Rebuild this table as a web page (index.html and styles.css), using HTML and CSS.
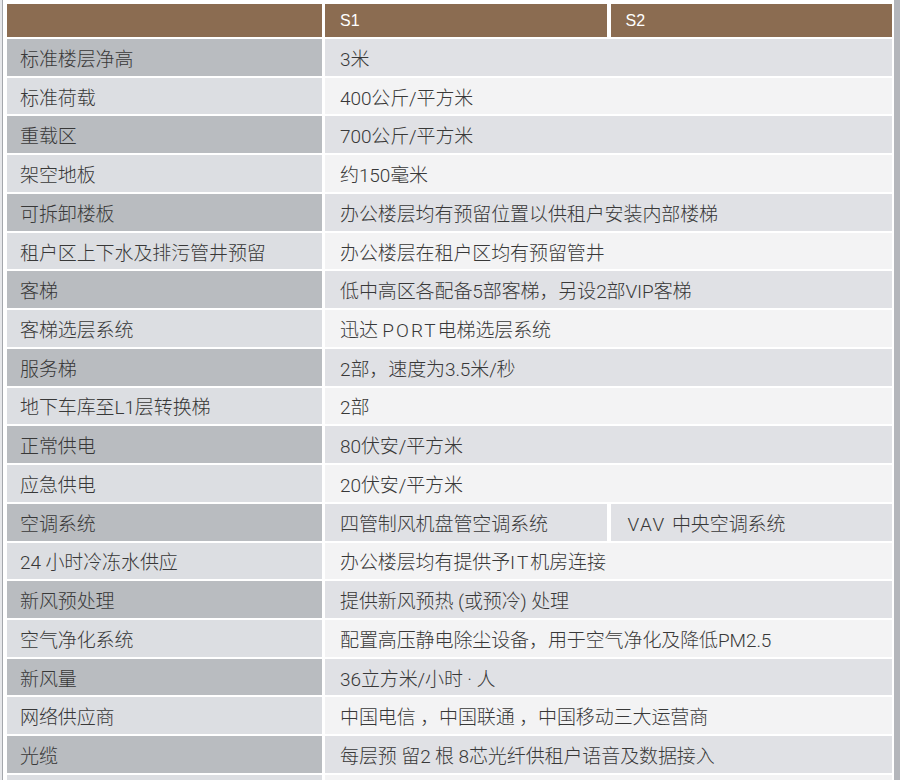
FILE: index.html
```html
<!DOCTYPE html>
<html lang="zh-CN">
<head>
<meta charset="utf-8">
<title>标准楼层规格</title>
<link rel="stylesheet" href="styles.css">
</head>
<body>
<div class="frame">
  <div class="inner">
    <div class="spec">
      <div class="cell head"></div>
      <div class="cell head"><span>S1</span></div>
      <div class="cell head"><span>S2</span></div>

      <div class="cell key dark"><span>标准楼层净高</span></div>
      <div class="cell val dark span"><span>3米</span></div>

      <div class="cell key light"><span>标准荷载</span></div>
      <div class="cell val light span"><span>400公斤/平方米</span></div>

      <div class="cell key dark"><span>重载区</span></div>
      <div class="cell val dark span"><span>700公斤/平方米</span></div>

      <div class="cell key light"><span>架空地板</span></div>
      <div class="cell val light span"><span>约150毫米</span></div>

      <div class="cell key dark"><span>可拆卸楼板</span></div>
      <div class="cell val dark span"><span>办公楼层均有预留位置以供租户安装内部楼梯</span></div>

      <div class="cell key light"><span>租户区上下水及排污管井预留</span></div>
      <div class="cell val light span"><span>办公楼层在租户区均有预留管井</span></div>

      <div class="cell key dark"><span>客梯</span></div>
      <div class="cell val dark span"><span>低中高区各配备5部客梯，另设2部VIP客梯</span></div>

      <div class="cell key light"><span>客梯选层系统</span></div>
      <div class="cell val light span"><span>迅达 <span class="wide">PORT</span>电梯选层系统</span></div>

      <div class="cell key dark"><span>服务梯</span></div>
      <div class="cell val dark span"><span>2部，速度为3.5米/秒</span></div>

      <div class="cell key light"><span>地下车库至L1层转换梯</span></div>
      <div class="cell val light span"><span>2部</span></div>

      <div class="cell key dark"><span>正常供电</span></div>
      <div class="cell val dark span"><span>80伏安/平方米</span></div>

      <div class="cell key light"><span>应急供电</span></div>
      <div class="cell val light span"><span>20伏安/平方米</span></div>

      <div class="cell key dark"><span>空调系统</span></div>
      <div class="cell val dark"><span>四管制风机盘管空调系统</span></div>
      <div class="cell val dark s2"><span><span class="wide-s">VAV </span>中央空调系统</span></div>

      <div class="cell key light"><span>24 小时冷冻水供应</span></div>
      <div class="cell val light span"><span>办公楼层均有提供予<span class="wide">IT</span>机房连接</span></div>

      <div class="cell key dark"><span>新风预处理</span></div>
      <div class="cell val dark span"><span>提供新风预热 (或预冷) 处理</span></div>

      <div class="cell key light"><span>空气净化系统</span></div>
      <div class="cell val light span"><span>配置高压静电除尘设备，用于空气净化及降低PM2.5</span></div>

      <div class="cell key dark"><span>新风量</span></div>
      <div class="cell val dark span"><span>36立方米/小时 · 人</span></div>

      <div class="cell key light"><span>网络供应商</span></div>
      <div class="cell val light span"><span>中国电信 ，中国联通 ，中国移动三大运营商</span></div>

      <div class="cell key dark"><span>光缆</span></div>
      <div class="cell val dark span"><span>每层预 留2 根 8芯光纤供租户语音及数据接入</span></div>

      <div class="cell key light"></div>
      <div class="cell val light span"></div>
    </div>
  </div>
</div>
</body>
</html>
```
FILE: styles.css
```css
html, body {
  margin: 0;
  padding: 0;
  background: #ffffff;
}

body {
  width: 900px;
  height: 780px;
  overflow: hidden;
}

.frame {
  border-left: 2px solid #e6e7ea;
  border-right: 6px solid #b4b6bb;
  min-height: 780px;
  box-sizing: border-box;
}

.inner {
  border-left: 1px solid #a4a7ac;
  padding: 4px 2px 0 4px;
}

.spec {
  display: grid;
  grid-template-columns: 314.5px 282px 281.5px;
  grid-template-rows: 33px;
  grid-auto-rows: 36.74px;
  column-gap: 3.5px;
  row-gap: 2px;
  font-family: Roboto, "Noto Sans CJK SC", sans-serif;
}

.cell {
  display: flex;
  align-items: center;
  font-size: 19px;
  font-weight: 300;
  letter-spacing: -0.1px;
  color: #383838;
  white-space: nowrap;
  overflow: hidden;
}

.head {
  background: #8b6c51;
  color: #ffffff;
  font-family: "Liberation Sans", sans-serif;
  font-size: 16px;
  font-weight: 400;
  letter-spacing: 0;
  padding-left: 15px;
}

.key {
  padding-left: 13px;
}

.val {
  padding-left: 15px;
}

.val.s2 {
  padding-left: 17px;
}

.span {
  grid-column: 2 / 4;
}

.key.dark {
  background: #b9bcc0;
}

.key.light {
  background: #dcdee2;
}

.val.dark {
  background: #e0e1e5;
}

.val.light {
  background: #f3f3f4;
}

.wide {
  letter-spacing: 2px;
}

.wide-s {
  letter-spacing: 1.5px;
}
```
